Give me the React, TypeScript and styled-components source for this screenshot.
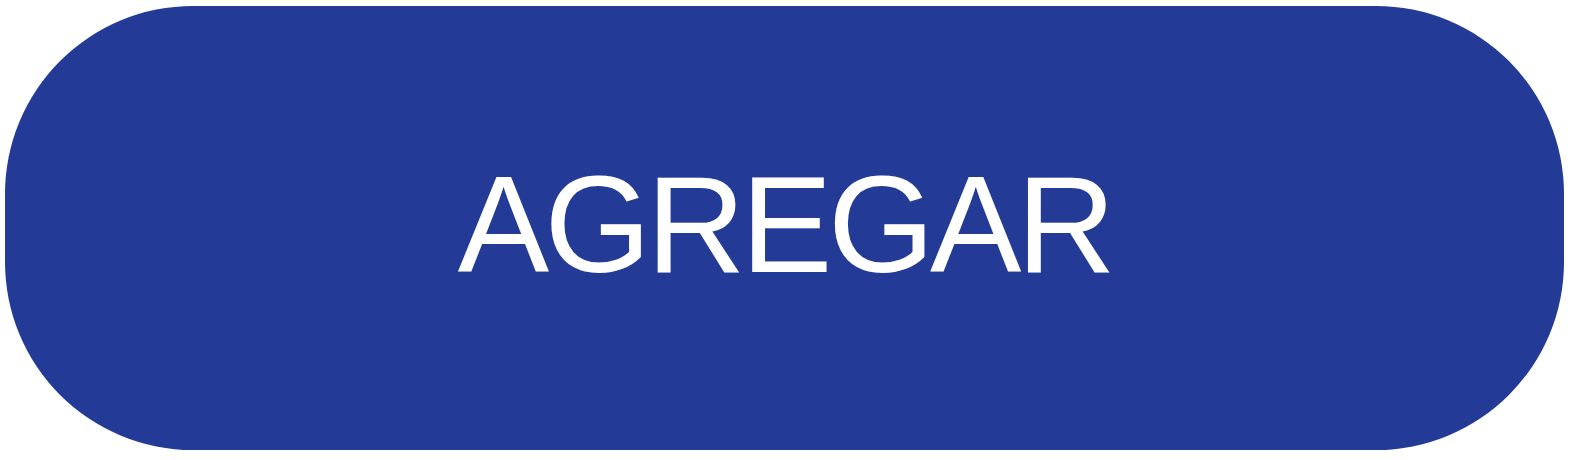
import React from "react";
import styled, { createGlobalStyle } from "styled-components";

const Global = createGlobalStyle`
  html, body { margin: 0; padding: 0; background: #ffffff; overflow: hidden; }
  #root { width: 1584px; height: 460px; }
`;

const Page = styled.div`
  box-sizing: border-box;
  width: 1584px;
  height: 460px;
  padding: 6px 20px 10px 5px;
  display: flex;
`;

const AddButton = styled.button`
  box-sizing: border-box;
  flex: 0 0 1559px;
  width: 1559px;
  height: 444px;
  border: none;
  border-radius: 188px;
  background: #233b96;
  color: #ffffff;
  font-family: "Liberation Sans", Arial, sans-serif;
  font-size: 137px;
  font-weight: 400;
  letter-spacing: -4.5px;
  line-height: 1;
  display: flex;
  align-items: center;
  justify-content: center;
  padding: 0 0 8px 0;
  margin: 0;
  cursor: pointer;
`;

export default function App() {
  return (
    <>
      <Global />
      <Page>
        <AddButton>AGREGAR</AddButton>
      </Page>
    </>
  );
}
